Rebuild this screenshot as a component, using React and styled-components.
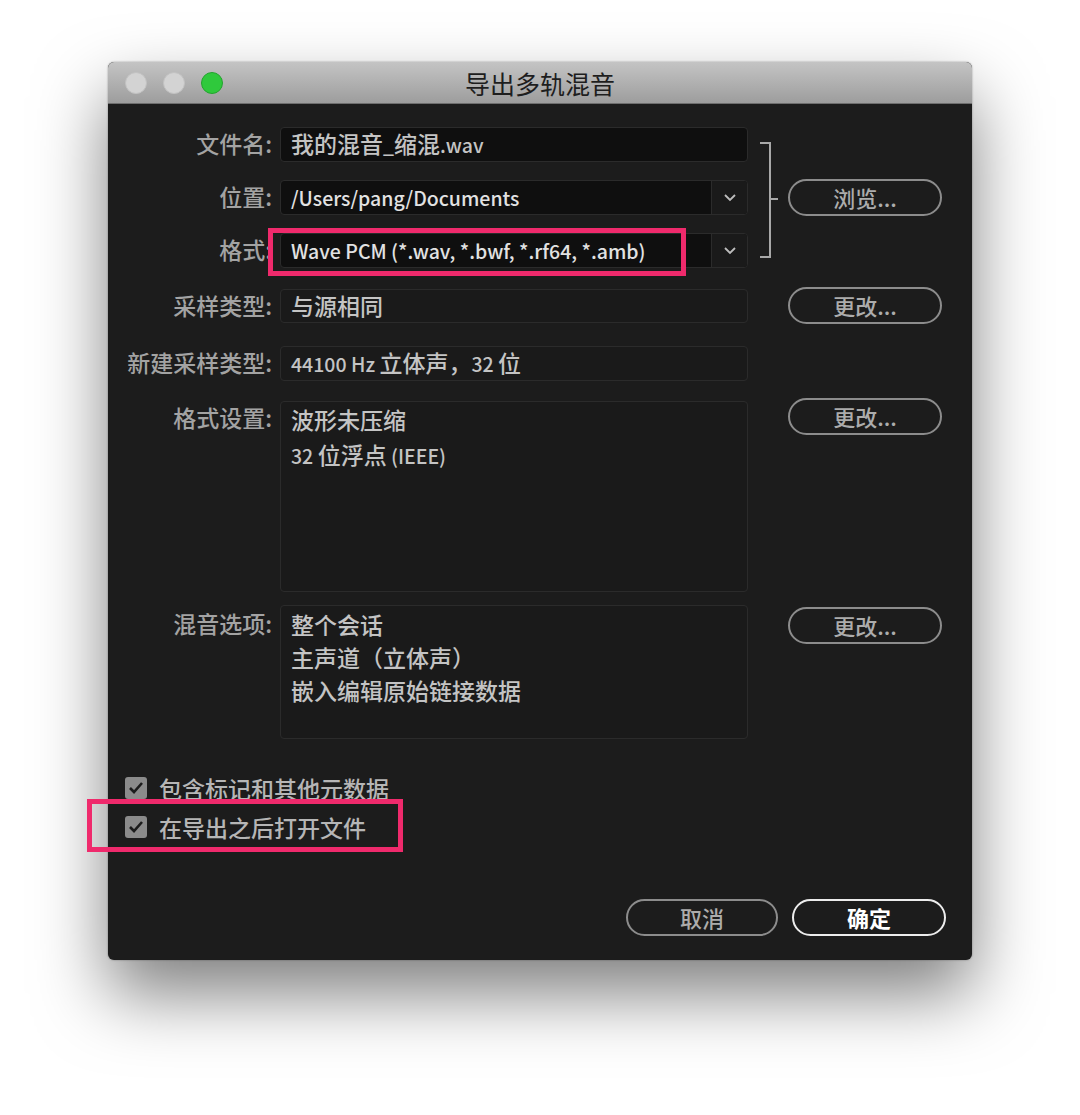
import styled, { createGlobalStyle } from 'styled-components';

const GlobalStyle = createGlobalStyle`
  html, body {
    margin: 0;
    padding: 0;
    background: #ffffff;
  }
  body {
    font-family: "Noto Sans CJK SC", "Noto Sans", sans-serif;
  }
`;

const Page = styled.div`
  width: 1080px;
  height: 1115px;
  padding: 62px 0 0 108px;
  box-sizing: border-box;
`;

const Window = styled.div`
  position: relative;
  width: 864px;
  border-radius: 6px;
  background: #1c1c1c;
  box-shadow: 0 34px 70px rgba(0, 0, 0, 0.5), 0 0 2px rgba(0, 0, 0, 0.4);
`;

const TitleBar = styled.div`
  position: relative;
  height: 42px;
  display: flex;
  align-items: center;
  justify-content: center;
  border-radius: 6px 6px 0 0;
  background: linear-gradient(#c4c4c4, #9d9d9d);
  border-bottom: 1px solid #6e6e6e;
  box-sizing: border-box;
`;

const Lights = styled.div`
  position: absolute;
  left: 17px;
  top: 10px;
  display: flex;
  gap: 16px;
`;

const Light = styled.span`
  width: 22px;
  height: 22px;
  border-radius: 50%;
  box-sizing: border-box;
  background: ${(p) => (p.$green ? '#2fc93c' : '#d3d3d3')};
  border: 1px solid ${(p) => (p.$green ? '#23a42e' : '#c2c2c2')};
`;

const Title = styled.h1`
  margin: 0;
  font-size: 25px;
  font-weight: 400;
  color: #1e1e1e;
`;

const Body = styled.div`
  padding: 23px 26px 24px 0;
`;

const FileGroup = styled.div`
  display: grid;
  grid-template-columns: 172px 468px 40px 154px;
  grid-template-rows: 35px 35px 35px;
  row-gap: 18px;
`;

const Row = styled.div`
  display: grid;
  grid-template-columns: 172px 468px 40px 154px;
  align-items: start;
  margin-top: ${(p) => p.$top}px;
`;

const Label = styled.div`
  grid-column: 1;
  padding-right: 8px;
  text-align: right;
  font-size: 23px;
  font-weight: 500;
  line-height: ${(p) => p.$lh || 32}px;
  color: #a3a3a3;
  white-space: nowrap;
`;

const Latin = styled.span`
  font-size: 19.5px;
`;

const Field = styled.div`
  grid-column: 2;
  display: flex;
  height: ${(p) => p.$h || 35}px;
  box-sizing: border-box;
  border: 1px solid #2b2b2b;
  border-radius: 4px;
  background: ${(p) => (p.$dark ? '#0f0f0f' : '#1a1a1a')};
  overflow: hidden;
`;

const FieldText = styled.div`
  flex: 1;
  padding: ${(p) => p.$pt || 0}px 10px 0;
  font-size: 23px;
  font-weight: 500;
  line-height: ${(p) => p.$lh || 31}px;
  color: ${(p) => (p.$bright ? '#e2e2e2' : '#c4c4c4')};
  white-space: nowrap;
`;

const Line = styled.div``;

const DropButton = styled.div`
  width: 35px;
  display: flex;
  align-items: center;
  justify-content: center;
  border-left: 1px solid #2b2b2b;
  background: #1a1a1a;
`;

const BracketCell = styled.div`
  grid-column: 3;
  grid-row: 1 / 4;
`;

const PillButton = styled.button`
  grid-column: 4;
  height: 37px;
  width: ${(p) => p.$w || 154}px;
  border-radius: 19px;
  background: transparent;
  border: 2px solid ${(p) => (p.$primary ? '#ececec' : '#8c8c8c')};
  color: ${(p) => (p.$primary ? '#ffffff' : '#acacac')};
  font-family: inherit;
  font-size: 22px;
  font-weight: ${(p) => (p.$primary ? 700 : 500)};
  padding: 0 0 2px;
  line-height: 1;
  align-self: ${(p) => p.$align || 'start'};
  margin-top: ${(p) => p.$mt || 0}px;
`;

const Checks = styled.div`
  margin-top: 29px;
  padding-left: 17px;
`;

const CheckRow = styled.label`
  display: flex;
  align-items: center;
  gap: 12px;
  height: 39px;
  font-size: 23px;
  font-weight: 500;
  color: #b6b6b6;
`;

const Box = styled.span`
  width: 22px;
  height: 22px;
  border-radius: 3px;
  background: #8b8b8b;
  display: flex;
  align-items: center;
  justify-content: center;
`;

const Footer = styled.div`
  display: flex;
  justify-content: flex-end;
  gap: 14px;
  margin-top: 53px;
`;

const Highlight = styled.div`
  position: absolute;
  left: ${(p) => p.$x}px;
  top: ${(p) => p.$y}px;
  width: ${(p) => p.$w}px;
  height: ${(p) => p.$h}px;
  border: 5px solid #ef2a6c;
  box-sizing: border-box;
  pointer-events: none;
`;

function Chevron() {
  return (
    <svg width="14" height="9" viewBox="0 0 14 9">
      <polyline points="2,2 7,7 12,2" fill="none" stroke="#bdbdbd" strokeWidth="1.8" />
    </svg>
  );
}

function Bracket() {
  return (
    <svg width="40" height="140" viewBox="0 0 40 140">
      <polyline points="12,16 22,16 22,130 12,130" fill="none" stroke="#a8a8a8" strokeWidth="2" />
      <line x1="22" y1="72" x2="30" y2="72" stroke="#a8a8a8" strokeWidth="2" />
    </svg>
  );
}

function Check() {
  return (
    <svg width="16" height="14" viewBox="0 0 16 14">
      <polyline points="2,7 6,11 14,2" fill="none" stroke="#1c1c1c" strokeWidth="2.6" />
    </svg>
  );
}

export default function App() {
  return (
    <Page>
      <GlobalStyle />
      <Window>
        <TitleBar>
          <Lights>
            <Light />
            <Light />
            <Light $green />
          </Lights>
          <Title>导出多轨混音</Title>
        </TitleBar>
        <Body>
          <FileGroup>
            <Label style={{ gridRow: 1 }}>文件名:</Label>
            <Field style={{ gridRow: 1 }} $dark>
              <FieldText>
                我的混音<Latin>_</Latin>缩混<Latin>.wav</Latin>
              </FieldText>
            </Field>
            <Label style={{ gridRow: 2 }}>位置:</Label>
            <Field style={{ gridRow: 2 }} $dark>
              <FieldText $bright>
                <Latin>/Users/pang/Documents</Latin>
              </FieldText>
              <DropButton>
                <Chevron />
              </DropButton>
            </Field>
            <Label style={{ gridRow: 3 }}>格式:</Label>
            <Field style={{ gridRow: 3 }} $dark>
              <FieldText $bright>
                <Latin>Wave PCM (*.wav, *.bwf, *.rf64, *.amb)</Latin>
              </FieldText>
              <DropButton>
                <Chevron />
              </DropButton>
            </Field>
            <BracketCell>
              <Bracket />
            </BracketCell>
            <PillButton style={{ gridRow: 2 }} $align="center">
              浏览...
            </PillButton>
          </FileGroup>

          <Row $top={21}>
            <Label>采样类型:</Label>
            <Field $h={34}>
              <FieldText $lh={30}>与源相同</FieldText>
            </Field>
            <PillButton $mt={-2}>更改...</PillButton>
          </Row>

          <Row $top={22}>
            <Label>新建采样类型:</Label>
            <Field>
              <FieldText>
                <Latin>44100 Hz </Latin>立体声，<Latin>32 </Latin>位
              </FieldText>
            </Field>
          </Row>

          <Row $top={20}>
            <Label>格式设置:</Label>
            <Field $h={191}>
              <FieldText $lh={35}>
                <Line>波形未压缩</Line>
                <Line>
                  <Latin>32 </Latin>位浮点<Latin> (IEEE)</Latin>
                </Line>
              </FieldText>
            </Field>
            <PillButton $mt={-3}>更改...</PillButton>
          </Row>

          <Row $top={13}>
            <Label $lh={36}>混音选项:</Label>
            <Field $h={134}>
              <FieldText $lh={33} $pt={2}>
                <Line>整个会话</Line>
                <Line>主声道（立体声）</Line>
                <Line>嵌入编辑原始链接数据</Line>
              </FieldText>
            </Field>
            <PillButton $mt={2}>更改...</PillButton>
          </Row>

          <Checks>
            <CheckRow>
              <Box>
                <Check />
              </Box>
              包含标记和其他元数据
            </CheckRow>
            <CheckRow>
              <Box>
                <Check />
              </Box>
              在导出之后打开文件
            </CheckRow>
          </Checks>

          <Footer>
            <PillButton $w={152}>取消</PillButton>
            <PillButton $primary>确定</PillButton>
          </Footer>
        </Body>

        <Highlight $x={160} $y={166} $w={418} $h={48} />
        <Highlight $x={-21} $y={737} $w={316} $h={53} />
      </Window>
    </Page>
  );
}
